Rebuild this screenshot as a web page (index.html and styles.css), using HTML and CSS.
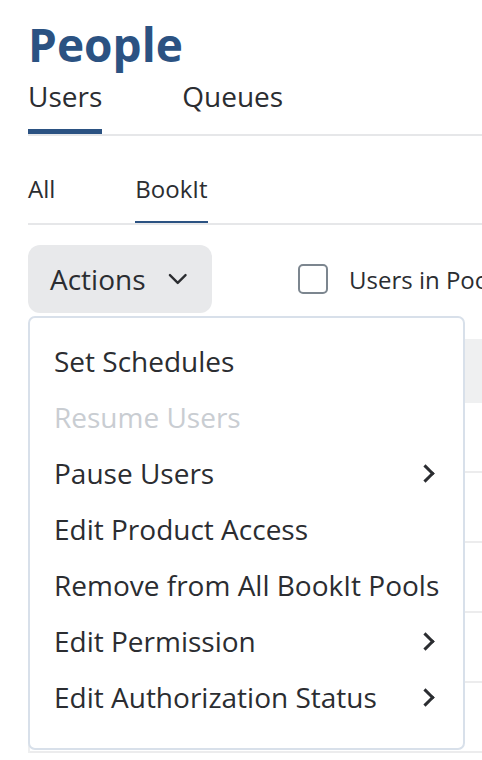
FILE: index.html
```html
<!DOCTYPE html>
<html>
  <head>
    <title>People</title>
    <meta charset="utf-8"/>
    <link rel="stylesheet" href="styles.css">
  </head>
  <body>
    <main class="page">
      <h1 class="title">People</h1>

      <nav class="tabs">
        <a class="tab active">Users</a>
        <a class="tab">Queues</a>
      </nav>

      <nav class="subtabs">
        <a class="subtab">All</a>
        <a class="subtab active">BookIt</a>
      </nav>

      <div class="toolbar">
        <div class="actions">
          <button class="actions-btn">
            Actions
            <svg width="20" height="12" viewBox="0 0 20 12"><polyline points="2,2 10,10 18,2" fill="none" stroke="#2b2d31" stroke-width="2.4" stroke-linecap="round" stroke-linejoin="round"/></svg>
          </button>

          <!-- open dropdown, lies over the table -->
          <ul class="menu">
            <li class="menu-item">Set Schedules</li>
            <li class="menu-item disabled">Resume Users</li>
            <li class="menu-item">Pause Users <span class="sub"></span></li>
            <li class="menu-item">Edit Product Access</li>
            <li class="menu-item">Remove from All BookIt Pools</li>
            <li class="menu-item">Edit Permission <span class="sub"></span></li>
            <li class="menu-item">Edit Authorization Status <span class="sub"></span></li>
          </ul>
        </div>

        <label class="check">
          <span class="box"></span>
          Users in Pool
        </label>
      </div>

      <div class="table">
        <div class="thead"></div>
        <div class="trow"></div>
        <div class="trow"></div>
        <div class="trow"></div>
        <div class="trow"></div>
        <div class="trow"></div>
      </div>
    </main>
  </body>
</html>
```

FILE: styles.css
```css
html, body {
  margin: 0;
  height: 760px;
  overflow: hidden;
  background: #fff;
}
body {
  font-family: "Open Sans", "Noto Sans", sans-serif;
  color: #2b2d31;
}
.page {
  width: 720px;
  padding-left: 28px;
}

.title {
  margin: 16px 0 0;
  font-size: 46px;
  line-height: 56px;
  font-weight: 700;
  color: #2b5282;
}

/* main tabs */
.tabs {
  display: flex;
  gap: 80px;
  margin-top: 6px;
  border-bottom: 2px solid #e6e7e9;
}
.tab {
  font-size: 28px;
  line-height: 36px;
  padding-bottom: 15px;
  border-bottom: 5px solid transparent;
}
.tab.active {
  border-bottom-color: #2b5282;
}

/* sub tabs */
.subtabs {
  display: flex;
  gap: 80px;
  margin-top: 37px;
  border-bottom: 2px solid #e6e7e9;
}
.subtab {
  font-size: 24px;
  line-height: 32px;
  padding-bottom: 16px;
  border-bottom: 2px solid transparent;
}
.subtab.active {
  border-bottom-color: #2b5282;
}

/* toolbar */
.toolbar {
  display: flex;
  align-items: center;
  gap: 86px;
  margin-top: 20px;
  white-space: nowrap;
}
.actions {
  position: relative;
}
.actions-btn {
  display: flex;
  align-items: center;
  gap: 22px;
  height: 68px;
  width: 184px;
  padding: 0 25px 0 22px;
  border: 0;
  border-radius: 12px;
  background: #e8e9eb;
  font-family: inherit;
  font-size: 28px;
  color: #2b2d31;
}
.check {
  display: flex;
  align-items: center;
  gap: 21px;
  font-size: 24px;
}
.box {
  width: 26px;
  height: 26px;
  border: 2px solid #7c868f;
  border-radius: 5px;
}

.menu {
  position: absolute;
  top: calc(100% + 3px);
  left: 0;
  z-index: 2;
  width: 433px;
  margin: 0;
  padding: 15px 0 23px;
  list-style: none;
  background: #fff;
  border: 2px solid #d8e0ea;
  border-radius: 7px;
}
.menu-item {
  display: flex;
  justify-content: space-between;
  align-items: center;
  padding: 0 31px 0 24px;
  font-size: 28px;
  line-height: 56px;
}
.menu-item.disabled {
  color: #c9cdd2;
}
.sub {
  width: 10px;
  height: 10px;
  border-top: 3px solid #2b2d31;
  border-right: 3px solid #2b2d31;
  transform: rotate(45deg);
}

/* table behind the menu */
.table {
  margin-top: 26px;
  border-left: 2px solid #eeeff0;
}
.thead {
  height: 64px;
  background: #eff0f1;
}
.trow {
  height: 68px;
  border-bottom: 2px solid #ececed;
}
```
